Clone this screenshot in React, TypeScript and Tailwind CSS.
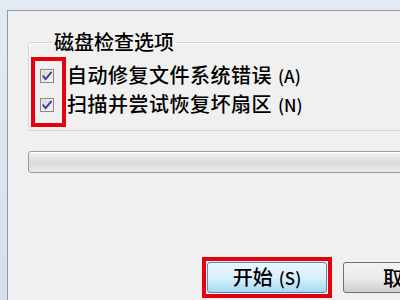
import React from 'react';

const font = "font-['Noto_Sans_CJK_SC','Noto_Sans_CJK_JP',sans-serif]";

function CheckBox() {
  return (
    <span className="flex h-[14px] w-[14px] items-center justify-center border border-[#8a8a8a] bg-gradient-to-br from-[#d4d4d8] to-[#f7f7f7] shadow-[inset_0_0_0_1px_#ececec]">
      <svg width="12" height="12" viewBox="0 0 12 12">
        <path d="M2.2 6.2 L4.6 9.2 L10 2.6" fill="none" stroke="#4b3f9a" strokeWidth="2" strokeLinecap="round" strokeLinejoin="round" />
      </svg>
    </span>
  );
}

function Option({ label, hotkey }: { label: string; hotkey: string }) {
  return (
    <div className="flex h-[29px] items-center">
      <CheckBox />
      <span className="ml-[13px] text-[20px] font-medium leading-[24px] tracking-[0.5px] text-black">
        {label}
        <span className="ml-[6px] text-[17px] tracking-normal">({hotkey})</span>
      </span>
    </div>
  );
}

export default function App() {
  return (
    <div className={`h-[300px] w-[400px] overflow-hidden bg-gradient-to-b from-[#e4ebf2] to-[#d3e0ec] pl-[7px] pt-[10px] ${font}`}>
      <div className="h-[320px] w-[480px] border-l border-t border-[#8c9aab] bg-[#f0f0f0] pl-[20px]">
        <fieldset className="relative mt-[19px] mr-[40px] rounded-[3px] border border-[#d0d6dc] px-[11px] pb-[11px] shadow-[inset_1px_1px_0_#fff]">
          <legend className="ml-[12px] px-[2px] text-[20px] font-medium leading-[24px] text-black">磁盘检查选项</legend>
          <div className="relative pt-[7px]">
            <Option label="自动修复文件系统错误" hotkey="A" />
            <Option label="扫描并尝试恢复坏扇区" hotkey="N" />
            <div className="absolute left-[-9px] top-[3px] h-[70px] w-[35px] border-4 border-[#e3000f]" />
          </div>
        </fieldset>

        <div className="mt-[20px] mr-[20px] h-[22px] rounded-[3px] border border-[#9c9c9c] bg-gradient-to-b from-[#f6f6f6] via-[#dadada] to-[#e8e8e8] shadow-[inset_0_1px_0_#fff]" />

        <div className="mt-[84px] flex items-center gap-[11px] pl-[174px]">
          <div className="border-4 border-[#e3000f] p-[1px]">
            <button className="block h-[31px] w-[120px] rounded-[3px] border border-[#5b87a8] bg-gradient-to-b from-[#eaf6fd] via-[#d9f0fc] to-[#a7d9f5] text-[20px] font-medium leading-[24px] text-black">
              开始<span className="ml-[6px] text-[17px]">(S)</span>
            </button>
          </div>
          <button className="h-[31px] w-[120px] rounded-[3px] border border-[#707070] bg-gradient-to-b from-[#f2f2f2] via-[#ebebeb] to-[#cfcfcf] text-[20px] font-medium leading-[24px] text-black">
            取消
          </button>
        </div>
      </div>
    </div>
  );
}
